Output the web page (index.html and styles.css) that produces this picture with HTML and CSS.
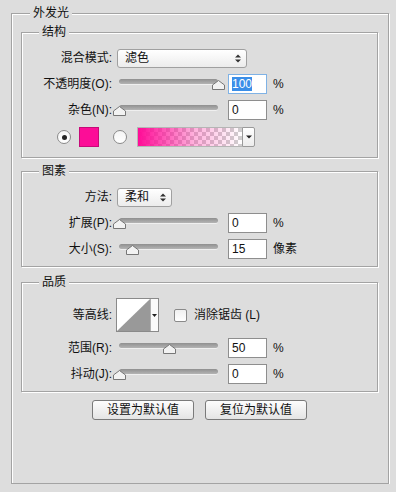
FILE: index.html
```html
<!DOCTYPE html>
<html lang="zh-CN">
<head>
    <meta charset="UTF-8">
    <title>外发光</title>
    <link rel="stylesheet" href="styles.css">
</head>
<body>
    <div class="panel">
        <span class="panel-title">外发光</span>

        <div class="group group-structure">
            <span class="group-title">结构</span>
            <div class="row">
                <span class="label">混合模式:</span>
                <div class="select select-blend">
                    <span>滤色</span>
                    <svg class="updown" width="6" height="9" viewBox="0 0 6 9"><path d="M0 3.5 L3 0.5 L6 3.5 Z M0 5.5 L3 8.5 L6 5.5 Z" fill="#333"/></svg>
                </div>
            </div>
            <div class="row">
                <span class="label">不透明度(O):</span>
                <div class="slider">
                    <div class="track"></div>
                    <svg class="thumb" style="left: 100%" width="13" height="10" viewBox="0 0 13 10"><path d="M0.5 9.5 V5 L6.5 0.5 L12.5 5 V9.5 Z" fill="#f2f2f2" stroke="#777"/></svg>
                </div>
                <div class="field field-focus"><span class="selected">100</span></div>
                <span class="unit">%</span>
            </div>
            <div class="row">
                <span class="label">杂色(N):</span>
                <div class="slider">
                    <div class="track"></div>
                    <svg class="thumb" style="left: 0%" width="13" height="10" viewBox="0 0 13 10"><path d="M0.5 9.5 V5 L6.5 0.5 L12.5 5 V9.5 Z" fill="#f2f2f2" stroke="#777"/></svg>
                </div>
                <div class="field">0</div>
                <span class="unit">%</span>
            </div>
            <div class="row row-color">
                <span class="radio radio-on"></span>
                <span class="swatch"></span>
                <span class="radio radio-second"></span>
                <span class="gradient"></span>
                <span class="gradient-drop">
                    <svg width="6" height="4" viewBox="0 0 6 4"><path d="M0 0.5 H6 L3 3.5 Z" fill="#222"/></svg>
                </span>
            </div>
        </div>

        <div class="group group-elements">
            <span class="group-title">图素</span>
            <div class="row">
                <span class="label">方法:</span>
                <div class="select select-method">
                    <span>柔和</span>
                    <svg class="updown" width="6" height="9" viewBox="0 0 6 9"><path d="M0 3.5 L3 0.5 L6 3.5 Z M0 5.5 L3 8.5 L6 5.5 Z" fill="#333"/></svg>
                </div>
            </div>
            <div class="row">
                <span class="label">扩展(P):</span>
                <div class="slider">
                    <div class="track"></div>
                    <svg class="thumb" style="left: 0%" width="13" height="10" viewBox="0 0 13 10"><path d="M0.5 9.5 V5 L6.5 0.5 L12.5 5 V9.5 Z" fill="#f2f2f2" stroke="#777"/></svg>
                </div>
                <div class="field">0</div>
                <span class="unit">%</span>
            </div>
            <div class="row">
                <span class="label">大小(S):</span>
                <div class="slider">
                    <div class="track"></div>
                    <svg class="thumb" style="left: 13%" width="13" height="10" viewBox="0 0 13 10"><path d="M0.5 9.5 V5 L6.5 0.5 L12.5 5 V9.5 Z" fill="#f2f2f2" stroke="#777"/></svg>
                </div>
                <div class="field">15</div>
                <span class="unit">像素</span>
            </div>
        </div>

        <div class="group group-quality">
            <span class="group-title">品质</span>
            <div class="row row-contour">
                <span class="label">等高线:</span>
                <div class="contour">
                    <svg width="33" height="32" viewBox="0 0 33 32"><rect width="33" height="32" fill="#fff"/><path d="M0 32 L33 0 V32 Z" fill="#999"/></svg>
                    <span class="contour-drop">
                        <svg width="5" height="3" viewBox="0 0 5 3"><path d="M0 0 H5 L2.5 3 Z" fill="#222"/></svg>
                    </span>
                </div>
                <span class="checkbox"></span>
                <span class="check-label">消除锯齿 (L)</span>
            </div>
            <div class="row">
                <span class="label">范围(R):</span>
                <div class="slider">
                    <div class="track"></div>
                    <svg class="thumb" style="left: 50%" width="13" height="10" viewBox="0 0 13 10"><path d="M0.5 9.5 V5 L6.5 0.5 L12.5 5 V9.5 Z" fill="#f2f2f2" stroke="#777"/></svg>
                </div>
                <div class="field">50</div>
                <span class="unit">%</span>
            </div>
            <div class="row">
                <span class="label">抖动(J):</span>
                <div class="slider">
                    <div class="track"></div>
                    <svg class="thumb" style="left: 0%" width="13" height="10" viewBox="0 0 13 10"><path d="M0.5 9.5 V5 L6.5 0.5 L12.5 5 V9.5 Z" fill="#f2f2f2" stroke="#777"/></svg>
                </div>
                <div class="field">0</div>
                <span class="unit">%</span>
            </div>
        </div>

        <div class="actions">
            <button>设置为默认值</button>
            <button>复位为默认值</button>
        </div>
    </div>
</body>
</html>
```

FILE: styles.css
```css
* {
    box-sizing: border-box;
}

body {
    margin: 0;
    background: #dddddd;
    color: #111;
    font-family: "Liberation Sans", "Noto Sans CJK SC", sans-serif;
    font-size: 12px;
    line-height: 14px;
}

/* etched frames */
.panel,
.group {
    position: relative;
    border: 1px solid #a3a3a3;
    box-shadow: inset 1px 1px 0 #fff, 1px 1px 0 #fff;
}

.panel {
    width: 378px;
    height: 471px;
    margin: 13px 0 0 11px;
    padding: 18px 10px 0 9px;
}

.panel-title,
.group-title {
    position: absolute;
    top: -8px;
    padding: 0 3px;
    background: #dddddd;
}

.panel-title {
    left: 18px;
}

.group-title {
    left: 17px;
}

.group {
    padding-top: 12px;
}

.group-structure {
    height: 126px;
}

.group-elements {
    height: 96px;
    margin-top: 13px;
}

.group-quality {
    height: 110px;
    margin-top: 15px;
}

.row {
    display: flex;
    align-items: center;
    height: 26px;
}

.label {
    flex: none;
    width: 90px;
    text-align: right;
}

/* dropdowns */
.select {
    display: flex;
    align-items: center;
    justify-content: space-between;
    height: 19px;
    margin-left: 5px;
    padding: 0 5px 0 7px;
    border: 1px solid #a0a0a0;
    border-radius: 3px;
    background: linear-gradient(#ffffff, #ececec);
}

.select-blend {
    width: 130px;
}

.select-method {
    width: 55px;
}

/* sliders */
.slider {
    position: relative;
    width: 99px;
    height: 12px;
    margin-left: 7px;
}

.track {
    height: 5px;
    margin-top: 1px;
    border-radius: 3px;
    background: linear-gradient(#8f8f8f, #b4b4b4);
    box-shadow: 0 1px 0 #efefef;
}

.thumb {
    position: absolute;
    top: 2px;
    margin-left: -6px;
}

/* number fields */
.field {
    width: 39px;
    height: 20px;
    margin-left: 10px;
    padding: 0 3px;
    border: 1px solid #8e8e8e;
    background: #fff;
    line-height: 18px;
}

.field-focus {
    border-color: #7fb2e5;
}

.selected {
    background: #3a8ee8;
    color: #fff;
}

.unit {
    margin-left: 6px;
}

/* colour row */
.row-color {
    padding-left: 35px;
    margin-top: 1px;
}

.radio {
    width: 14px;
    height: 14px;
    border: 1px solid #8a8a8a;
    border-radius: 50%;
    background: linear-gradient(#f4f4f4, #ffffff);
    display: flex;
    align-items: center;
    justify-content: center;
}

.radio-on::after {
    content: '';
    width: 5px;
    height: 5px;
    border-radius: 50%;
    background: #222;
}

.swatch {
    width: 20px;
    height: 20px;
    margin-left: 8px;
    background: #fc0d97;
    border: 1px solid #c60a78;
}

.radio-second {
    margin-left: 14px;
}

.gradient {
    width: 105px;
    height: 20px;
    margin-left: 10px;
    border: 1px solid #b5b5b5;
    border-right: none;
    background:
        linear-gradient(to right, #ff0c97, rgba(255, 40, 160, 0.35) 55%, rgba(255, 255, 255, 0) 100%),
        conic-gradient(#cfcfcf 25%, #ffffff 0 50%, #cfcfcf 0 75%, #ffffff 0) 0 0 / 8px 8px;
}

.gradient-drop {
    display: flex;
    align-items: center;
    justify-content: center;
    width: 13px;
    height: 20px;
    border: 1px solid #9a9a9a;
    border-radius: 0 2px 2px 0;
    background: linear-gradient(#ffffff, #ececec);
}

/* contour */
.row-contour {
    height: 40px;
}

.contour {
    display: flex;
    height: 34px;
    margin-left: 4px;
    border: 1px solid #8a8a8a;
}

.contour-drop {
    display: flex;
    align-items: center;
    justify-content: center;
    width: 8px;
    border-left: 1px solid #b0b0b0;
    background: #fafafa;
}

.checkbox {
    width: 13px;
    height: 13px;
    margin-left: 15px;
    border: 1px solid #8a8a8a;
    border-radius: 2px;
    background: linear-gradient(#f0f0f0, #ffffff);
}

.check-label {
    margin-left: 7px;
}

/* buttons */
.actions {
    display: flex;
    justify-content: center;
    gap: 11px;
    margin-top: 8px;
}

button {
    width: 102px;
    height: 20px;
    padding: 0;
    border: 1px solid #7a7a7a;
    border-radius: 3px;
    background: linear-gradient(#fdfdfd, #e4e4e4);
    color: #111;
    font: inherit;
}
```
